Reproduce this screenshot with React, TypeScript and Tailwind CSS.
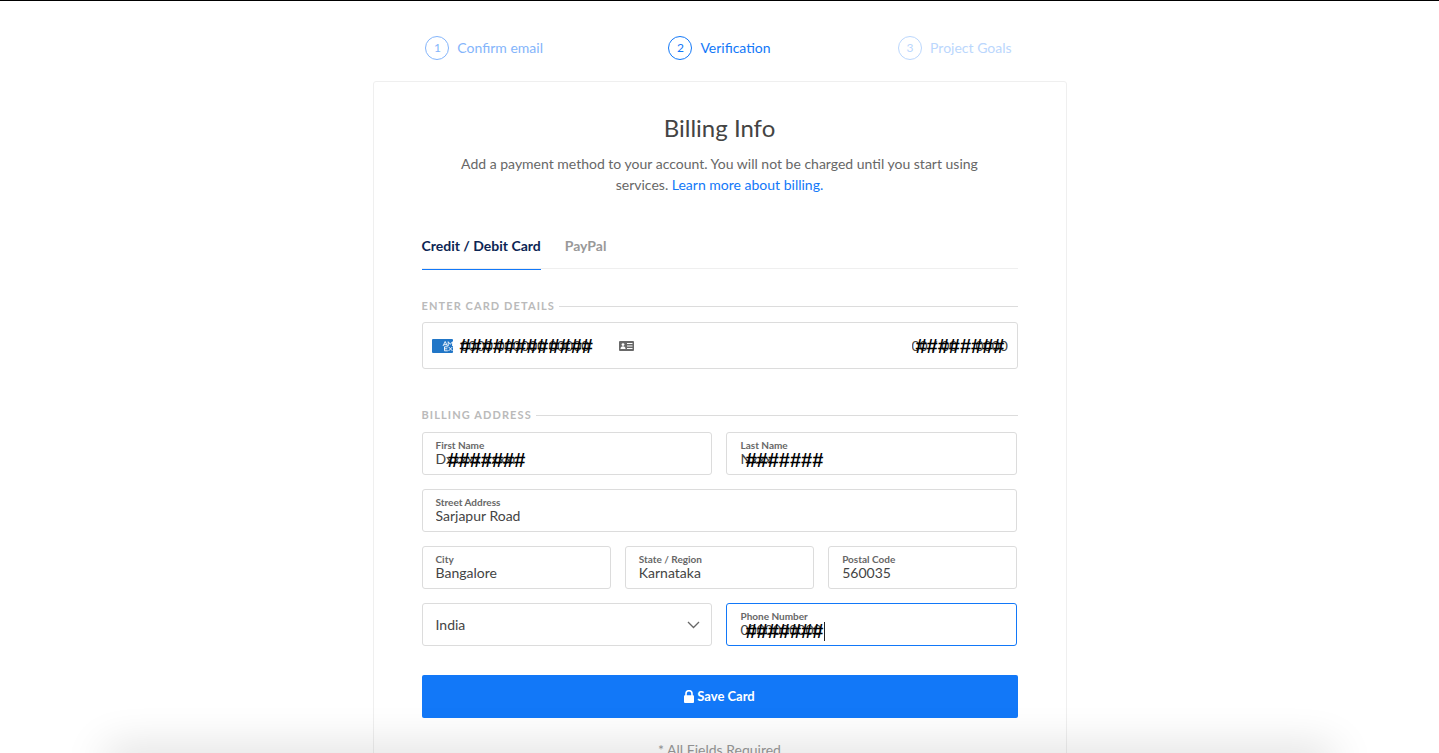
import { useState } from "react";
import type { ReactNode } from "react";
import clsx from "clsx";

const steps = [
  { n: 1, label: "Confirm email", tone: "text-[#84b5fb] border-[#84b5fb]" },
  { n: 2, label: "Verification", tone: "text-[#1278f8] border-[#1278f8]" },
  { n: 3, label: "Project Goals", tone: "text-[#bbd7fd] border-[#bbd7fd]" },
];

function SectionLabel({ children }: { children: ReactNode }) {
  return (
    <div className="flex h-4 items-center gap-1">
      <h2 className="text-[11px] font-bold leading-4 tracking-widest text-[#bababa]">{children}</h2>
      <span className="h-px flex-1 bg-[#dcdcdc]" />
    </div>
  );
}

function Mask({ text, className }: { text: string; className: string }) {
  return (
    <span
      aria-hidden="true"
      className={clsx(
        "pointer-events-none absolute font-['Liberation_Sans',sans-serif] text-xl leading-5 font-bold text-black",
        className,
      )}
    >
      {text}
    </span>
  );
}

type FieldProps = {
  id: string;
  label: string;
  value: string;
  span: string;
  mask?: string;
  maskLeft?: string;
  active?: boolean;
};

function Field({ id, label, value, span, mask, maskLeft = "left-[18px]", active }: FieldProps) {
  const [current, setCurrent] = useState(value);
  return (
    <div
      className={clsx(
        "relative flex h-[43px] flex-col rounded-[3px] border bg-white px-[13px] pt-[7px]",
        active ? "border-[#1278f8]" : "border-[#dcdcdc]",
        span,
      )}
    >
      <label htmlFor={id} className="text-[10px] font-bold leading-[11px] text-[#676767]">
        {label}
      </label>
      <input
        id={id}
        value={current}
        onChange={(e) => setCurrent(e.target.value)}
        className="w-full bg-transparent text-sm leading-4 text-[#444] outline-none"
      />
      {mask && <Mask text={mask} className={clsx("top-[17px]", maskLeft)} />}
      {active && <span className="absolute left-[97px] top-[18px] h-[19px] w-px bg-[#222]" />}
    </div>
  );
}

function AmexIcon() {
  return (
    <svg width="21" height="14" viewBox="0 0 21 14" aria-label="Card type" role="img">
      <rect width="21" height="14" rx="1" fill="#2176c7" />
      <g fill="none" stroke="#fff" strokeWidth="0.9">
        <path d="M11 7L13.200 2.500L15.400 7M12 5.700h2.500M16.200 7V2.700L18.300 5.300L20.500 2.700V7" />
        <path d="M15.800 7.800H12.500V11.800H15.800M12.500 9.800H15.300M16.500 7.800L20.500 12M20.500 7.800L16.500 12" />
      </g>
    </svg>
  );
}

function IdCardIcon() {
  return (
    <svg width="15" height="10" viewBox="0 0 15 10" aria-hidden="true">
      <rect width="15" height="10" rx="1" fill="#696969" />
      <g fill="#fff">
        <circle cx="4" cy="3.6" r="1.4" />
        <path d="M1.500 8c0-2 1-2.800 2.500-2.800S6.500 6 6.500 8z" />
        <rect x="8" y="2" width="5.500" height="1" />
        <rect x="8" y="4.500" width="5.500" height="1" />
        <rect x="8" y="7" width="5.500" height="1" />
      </g>
    </svg>
  );
}

function LockIcon() {
  return (
    <svg width="10" height="13" viewBox="0 0 10 13" aria-hidden="true">
      <path d="M2 6V3.700a3 3 0 0 1 6 0V6" fill="none" stroke="#fff" strokeWidth="1.600" />
      <rect y="5.300" width="10" height="7.700" rx="1" fill="#fff" />
    </svg>
  );
}

export default function App() {
  const [tab, setTab] = useState("card");
  const cardInput = "bg-transparent text-sm leading-4 text-[#444] outline-none";

  return (
    <div className="relative h-screen overflow-hidden border-t border-black bg-white px-4 font-['Lato','Noto_Sans',sans-serif] text-[#444]">
      <ol className="mx-auto grid max-w-[706px] grid-cols-3 pt-[35px]">
        {steps.map((s) => (
          <li key={s.n} className={clsx("flex items-center justify-center gap-2 text-sm", s.tone)}>
            <span className="flex size-6 items-center justify-center rounded-full border border-inherit text-xs">
              {s.n}
            </span>
            {s.label}
          </li>
        ))}
      </ol>

      <main className="mx-auto mt-[21px] max-w-[694px] rounded-[3px] border border-[#efefef] px-12 pb-12 pt-[30px]">
        <h1 className="text-center text-2xl leading-8">Billing Info</h1>
        <p className="mx-auto mt-[9px] max-w-[540px] text-center text-sm leading-[21px] text-[#676767]">
          Add a payment method to your account. You will not be charged until you start using services.{" "}
          <a href="#billing" className="text-[#1278f8]">
            Learn more about billing.
          </a>
        </p>

        <div role="tablist" className="mt-[41px] flex h-[33px] gap-6 border-b border-[#efefef] text-sm font-bold">
          <button
            role="tab"
            aria-selected={tab === "card"}
            onClick={() => setTab("card")}
            className={clsx(
              "-mb-0.5 h-[34px] border-b pb-[13px]",
              tab === "card" ? "border-[#1278f8] text-[#0c2554]" : "border-transparent text-[#999]",
            )}
          >
            Credit / Debit Card
          </button>
          <button
            role="tab"
            aria-selected={tab === "paypal"}
            onClick={() => setTab("paypal")}
            className={clsx(
              "-mb-0.5 h-[34px] border-b pb-[13px]",
              tab === "paypal" ? "border-[#1278f8] text-[#0c2554]" : "border-transparent text-[#999]",
            )}
          >
            PayPal
          </button>
        </div>

        <form onSubmit={(e) => e.preventDefault()}>
          <div className="mt-[29px]">
            <SectionLabel>ENTER CARD DETAILS</SectionLabel>
          </div>
          <div className="mt-2 flex h-[47px] items-center justify-between rounded-[3px] border border-[#dcdcdc] px-[9px]">
            <div className="relative flex items-center">
              <AmexIcon />
              <input
                aria-label="Card number"
                defaultValue="0000 000000 00000"
                className={clsx(cardInput, "ml-2 w-[142px]")}
              />
              <Mask text="############" className="left-7" />
              <span className="ml-4">
                <IdCardIcon />
              </span>
            </div>
            <div className="relative flex items-center gap-4">
              <input aria-label="Expiry date" defaultValue="00 / 00" className={clsx(cardInput, "w-12")} />
              <input aria-label="Security code" defaultValue="0000" className={clsx(cardInput, "w-8")} />
              <Mask text="########" className="left-1" />
            </div>
          </div>

          <div className="mt-[38px]">
            <SectionLabel>BILLING ADDRESS</SectionLabel>
          </div>
          <div className="mt-[9px] grid grid-cols-6 gap-[14px]">
            <Field
              id="first"
              label="First Name"
              value="Dxxxxx xxxxr"
              span="col-span-3"
              mask="#######"
              maskLeft="left-[25px]"
            />
            <Field id="last" label="Last Name" value="Nxxx" span="col-span-3" mask="#######" />
            <Field id="street" label="Street Address" value="Sarjapur Road" span="col-span-6" />
            <Field id="city" label="City" value="Bangalore" span="col-span-2" />
            <Field id="state" label="State / Region" value="Karnataka" span="col-span-2" />
            <Field id="postal" label="Postal Code" value="560035" span="col-span-2" />
            <div className="relative col-span-3">
              <select
                aria-label="Country"
                className="h-[43px] w-full appearance-none rounded-[3px] border border-[#dcdcdc] bg-white px-[13px] text-sm text-[#444] outline-none"
              >
                <option>India</option>
              </select>
              <svg
                className="pointer-events-none absolute right-3 top-[18px]"
                width="13"
                height="8"
                viewBox="0 0 13 8"
                aria-hidden="true"
              >
                <path d="M1 1l5.500 5.500L12 1" fill="none" stroke="#676767" strokeWidth="1.300" />
              </svg>
            </div>
            <Field id="phone" label="Phone Number" value="0000000000" span="col-span-3" mask="#######" active />
          </div>

          <button
            type="submit"
            className="mt-[29px] flex h-[43px] w-full items-center justify-center gap-[3px] rounded-[2px] bg-[#1278f8] text-[13px] font-bold text-white"
          >
            <LockIcon />
            Save Card
          </button>
        </form>
        <p className="mt-[22px] text-center text-sm leading-5 text-[#999]">* All Fields Required</p>
      </main>

      <div className="pointer-events-none absolute inset-x-[110px] -bottom-5 h-5 shadow-[0_0_44px_4px_rgba(0,0,0,0.16)]" />
    </div>
  );
}
